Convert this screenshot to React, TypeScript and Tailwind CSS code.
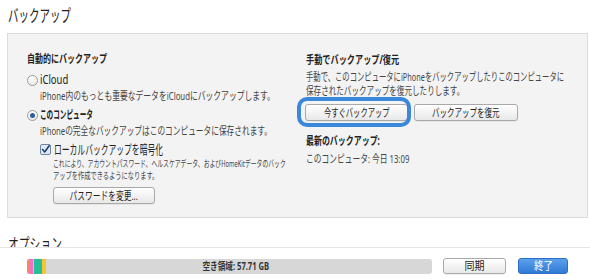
import React, { useLayoutEffect, useRef, useState } from "react";

const font = { fontFamily: '"Noto Sans", "Noto Sans CJK JP", sans-serif' };

// Text squeezed horizontally to the width it has in the picture (scale measured at runtime).
function Fit({ w, children, center }: { w: number; children: React.ReactNode; center?: boolean }) {
  const ref = useRef<HTMLSpanElement>(null);
  const [s, setS] = useState(1);
  useLayoutEffect(() => {
    const measure = () => {
      const el = ref.current;
      if (!el) return;
      const nat = el.offsetWidth;
      if (nat > 0) setS(w / nat);
    };
    measure();
    if (document.fonts && document.fonts.ready) document.fonts.ready.then(measure);
  }, [w]);
  return (
    <span
      ref={ref}
      className={"inline-block whitespace-nowrap align-top " + (center ? "origin-center" : "origin-left")}
      style={{ transform: `scaleX(${s})` }}
    >
      {children}
    </span>
  );
}

function Btn({ children, className = "" }: { children: React.ReactNode; className?: string }) {
  return (
    <div
      className={
        "flex items-center justify-center whitespace-nowrap rounded-[3px] border border-[#a9a9a9] bg-gradient-to-b from-[#ffffff] to-[#e8e8e8] text-[11.5px] leading-none text-[#222] shadow-[0_1px_0_rgba(0,0,0,0.05)] " +
        className
      }
    >
      {children}
    </div>
  );
}

function Radio({ checked }: { checked?: boolean }) {
  return (
    <div className="flex h-[11px] w-[11px] shrink-0 items-center justify-center rounded-full border border-[#9a9a9a] bg-gradient-to-b from-white to-[#eaeaea]">
      {checked && <div className="h-[5px] w-[5px] rounded-full bg-[#2d5f9e]" />}
    </div>
  );
}

export default function App() {
  return (
    <div className="relative h-[279px] w-[590px] overflow-hidden whitespace-nowrap bg-white text-[#333]" style={font}>
      <div className="pl-[8px] pt-[6px] text-[17px] leading-[20px] text-[#222]">
        <Fit w={63}>バックアップ</Fit>
      </div>

      <div className="ml-[7px] mt-[7px] h-[185px] w-[581px] border border-[#dcdcdc] bg-[#f3f3f3]">
        <div className="grid grid-cols-[279px_1fr] pl-[19px]">
          {/* Left column */}
          <div className="pt-[17px]">
            <div className="h-[15px] text-[11.5px] font-bold leading-[15px] text-[#222]">
              <Fit w={80}>自動的にバックアップ</Fit>
            </div>
            <div className="mt-[6px] flex h-[16px] items-center gap-[2px] text-[12.5px] leading-[16px] text-[#222]">
              <Radio />
              <Fit w={28}>iCloud</Fit>
            </div>
            <div className="h-[15px] pl-[13px] text-[11.5px] leading-[15px] text-[#444]">
              <Fit w={235}>iPhone内のもっとも重要なデータをiCloudにバックアップします。</Fit>
            </div>
            <div className="mt-[4px] flex h-[16px] items-center gap-[2px] text-[11.5px] font-bold leading-[16px] text-[#222]">
              <Radio checked />
              <Fit w={53}>このコンピュータ</Fit>
            </div>
            <div className="h-[15px] pl-[13px] text-[11.5px] leading-[15px] text-[#444]">
              <Fit w={232}>iPhoneの完全なバックアップはこのコンピュータに保存されます。</Fit>
            </div>
            <div className="mt-[3px] flex h-[16px] items-center gap-[3px] pl-[13px] text-[13px] leading-[16px] text-[#222]">
              <div className="flex h-[11px] w-[11px] shrink-0 items-center justify-center rounded-[2px] border border-[#6e86a6] bg-[#dfe8f3]">
                <svg width="11" height="11" viewBox="0 0 11 11">
                  <path d="M2 5.5 L4.5 8.5 L10 1" fill="none" stroke="#23406b" strokeWidth="2" strokeLinecap="round" strokeLinejoin="round" />
                </svg>
              </div>
              <Fit w={109}>ローカルバックアップを暗号化</Fit>
            </div>
            <div className="mt-[1px] pl-[26px] text-[9.5px] leading-[12px] text-[#444]">
              <div className="h-[12px]">
                <Fit w={233}>これにより、アカウントパスワード、ヘルスケアデータ、およびHomeKitデータのバック</Fit>
              </div>
              <div className="h-[12px]">
                <Fit w={105}>アップを作成できるようになります。</Fit>
              </div>
            </div>
            <div className="mt-[5px] pl-[26px]">
              <Btn className="h-[17px] w-[102px]">
                <Fit w={68} center>
                  パスワードを変更...
                </Fit>
              </Btn>
            </div>
          </div>

          {/* Right column */}
          <div className="pt-[18px]">
            <div className="h-[15px] text-[11.5px] font-bold leading-[15px] text-[#222]">
              <Fit w={93}>手動でバックアップ/復元</Fit>
            </div>
            <div className="mt-[3px] text-[11.5px] leading-[14px] text-[#444]">
              <div className="h-[14px]">
                <Fit w={258}>手動で、このコンピュータにiPhoneをバックアップしたりこのコンピュータに</Fit>
              </div>
              <div className="h-[14px]">
                <Fit w={158}>保存されたバックアップを復元したりします。</Fit>
              </div>
            </div>
            <div className="mt-[6px] flex gap-[6px] -ml-[1px]">
              <div className="relative">
                <Btn className="h-[17px] w-[103px]">
                  <Fit w={66} center>
                    今すぐバックアップ
                  </Fit>
                </Btn>
                <div className="pointer-events-none absolute -left-[8px] -right-[3px] -top-[7px] -bottom-[6px] rounded-[10px] border-[4px] border-[#3b87d9]" />
              </div>
              <Btn className="h-[17px] w-[104px]">
                <Fit w={68} center>
                  バックアップを復元
                </Fit>
              </Btn>
            </div>
            <div className="mt-[12px] h-[15px] text-[11.5px] font-bold leading-[15px] text-[#222]">
              <Fit w={74}>最新のバックアップ:</Fit>
            </div>
            <div className="mt-[3px] h-[15px] text-[11.5px] leading-[15px] text-[#444]">
              <Fit w={103}>このコンピュータ: 今日 13:09</Fit>
            </div>
          </div>
        </div>
      </div>

      <div className="pl-[8px] pt-[15px] text-[16px] leading-[22px] text-[#222]">
        <Fit w={54}>オプション</Fit>
      </div>

      {/* Footer overlay */}
      <div className="absolute bottom-0 left-0 right-0 top-[247px] border-t border-[#e6e6e6] bg-white">
        <div className="flex items-center pl-[27px] pt-[10px]">
          <div className="relative flex h-[15px] w-[405px] overflow-hidden rounded-[3px] bg-[#d7d7d7]">
            <div className="h-full w-[3px] bg-[#f08a60]" />
            <div className="h-full w-[3px] bg-[#f26fc9]" />
            <div className="h-full w-[1px] bg-[#9fd8c8]" />
            <div className="h-full w-[8px] bg-[#22bf98]" />
            <div className="h-full w-[4px] bg-[#f7c52e]" />
            <div className="absolute inset-0 flex items-center justify-center pl-[12px] text-[10px] font-bold leading-none text-[#333]">
              <Fit w={67} center>
                空き領域: 57.71 GB
              </Fit>
            </div>
          </div>
          <Btn className="ml-[11px] h-[16px] w-[63px] text-[11.5px]">
            <Fit w={20} center>
              同期
            </Fit>
          </Btn>
          <div className="ml-[12px] flex h-[16px] w-[50px] items-center justify-center rounded-[3px] border border-[#2c6fc4] bg-gradient-to-b from-[#5aa0ea] to-[#2f7ad6] text-[11.5px] leading-none text-white">
            <Fit w={19} center>
              終了
            </Fit>
          </div>
        </div>
      </div>
    </div>
  );
}
